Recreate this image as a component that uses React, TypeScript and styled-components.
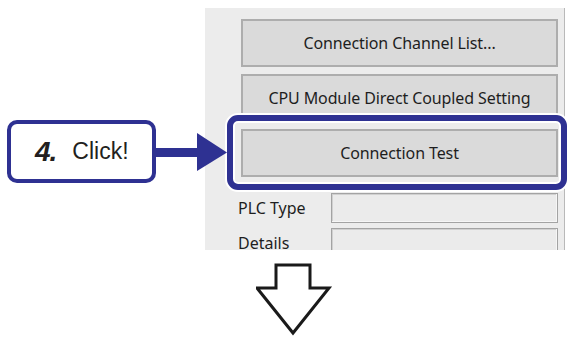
import styled, { createGlobalStyle } from 'styled-components'

const NAVY = '#2e3192'

const GlobalStyle = createGlobalStyle`
  *, *::before, *::after {
    box-sizing: border-box;
  }

  body {
    margin: 0;
    background: #ffffff;
  }
`

const BUTTONS = ['Connection Channel List...', 'CPU Module Direct Coupled Setting', 'Connection Test']
const FIELDS = ['PLC Type', 'Details']

function App() {
  return (
    <>
      <GlobalStyle />
      <Page>
        <TopRow>
          <Annotation>
            <Callout>
              <StepNo>4.</StepNo>
              <StepText>Click!</StepText>
            </Callout>
            <PointerArrow width="71" height="40" viewBox="0 0 71 40">
              <rect x="0" y="15" width="42" height="9" fill={NAVY} />
              <polygon points="41,0 71,19.5 41,38" fill={NAVY} />
            </PointerArrow>
          </Annotation>

          <PanelWrap>
            <Panel>
              <ButtonStack>
                {BUTTONS.map((label) => (
                  <DialogButton key={label}>{label}</DialogButton>
                ))}
              </ButtonStack>
              <FieldList>
                {FIELDS.map((label) => (
                  <FieldRow key={label}>
                    <FieldLabel>{label}</FieldLabel>
                    <FieldBox />
                  </FieldRow>
                ))}
              </FieldList>
            </Panel>
            <Highlight />
          </PanelWrap>
        </TopRow>

        <DownRow>
          <svg width="80" height="74" viewBox="0 0 80 74">
            <polygon
              points="20,2 54,2 54,25 73,25 37,70 1,25 20,25"
              fill="#ffffff"
              stroke="#1a1a1a"
              strokeWidth="3"
              strokeLinejoin="miter"
            />
          </svg>
        </DownRow>
      </Page>
    </>
  )
}

const Page = styled.main`
  width: 567px;
  height: 338px;
  overflow: hidden;
  background: #ffffff;
  display: flex;
  flex-direction: column;
`

const TopRow = styled.div`
  display: flex;
  padding-top: 8px;
`

const Annotation = styled.div`
  width: 205px;
  flex-shrink: 0;
  padding: 112px 0 0 7px;
  display: flex;
  align-items: flex-start;
`

const Callout = styled.div`
  width: 149px;
  height: 63px;
  flex-shrink: 0;
  border: 4px solid ${NAVY};
  border-radius: 10px;
  background: #ffffff;
  display: flex;
  align-items: center;
  padding-left: 24px;
  gap: 16px;
  font-family: 'Liberation Sans', Arial, sans-serif;
  color: #231f20;
`

const StepNo = styled.span`
  font-size: 28px;
  font-weight: 700;
  font-style: italic;
  letter-spacing: -1px;
`

const StepText = styled.span`
  font-size: 23px;
`

const PointerArrow = styled.svg`
  flex-shrink: 0;
  margin-top: 13px;
  margin-right: -22px;
  position: relative;
  z-index: 2;
`

const PanelWrap = styled.div`
  position: relative;
  width: 360px;
  height: 242px;
`

const Panel = styled.div`
  height: 100%;
  overflow: hidden;
  background: #ececec;
  border-right: 1px solid #b9b9b9;
  padding: 11px 6px 0 33px;
  font-family: 'Noto Sans', 'Open Sans', sans-serif;
  color: #1e1e1e;
`

const ButtonStack = styled.div`
  display: flex;
  flex-direction: column;
  gap: 7px;
  padding-left: 3px;
  width: 320px;
`

const DialogButton = styled.div`
  height: 48px;
  width: 317px;
  background: #dadada;
  border: 2px solid #adadad;
  display: flex;
  align-items: center;
  justify-content: center;
  font-size: 16px;
  letter-spacing: -0.1px;
`

const FieldList = styled.div`
  display: flex;
  flex-direction: column;
  gap: 5px;
  margin-top: 16px;
`

const FieldRow = styled.div`
  display: flex;
  align-items: center;
  height: 30px;
`

const FieldLabel = styled.span`
  width: 94px;
  font-size: 16px;
`

const FieldBox = styled.div`
  width: 228px;
  height: 30px;
  background: #ebebeb;
  border: 1px solid #a3a3a3;
  box-shadow: inset -1px -1px 0 #f6f6f6, inset 1px 1px 0 #d0d0d0;
`

const Highlight = styled.div`
  position: absolute;
  left: 22px;
  top: 107px;
  width: 340px;
  height: 75px;
  border: 6px solid ${NAVY};
  border-radius: 11px;
  box-shadow: 0 0 0 2px #ffffff, inset 0 0 0 2px #ffffff;
`

const DownRow = styled.div`
  display: flex;
  padding: 13px 0 0 256px;
`

export default App
